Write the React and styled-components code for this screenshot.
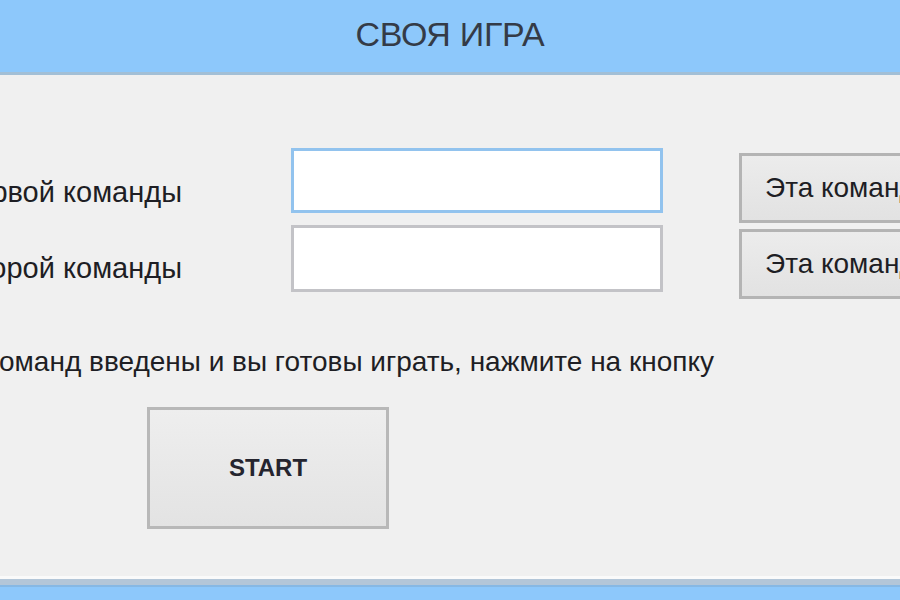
import styled, { createGlobalStyle } from "styled-components"

const GlobalStyle = createGlobalStyle`
  html, body {
    margin: 0;
    padding: 0;
    background: #f0f0f0;
    overflow: hidden;
  }
  * {
    box-sizing: border-box;
  }
`

const Window = styled.div`
  width: 900px;
  height: 600px;
  display: flex;
  flex-direction: column;
  font-family: "Liberation Sans", Arial, sans-serif;
  color: #1e1e24;
`

const Header = styled.div`
  height: 75px;
  flex-shrink: 0;
  background: #8dc8fb;
  border-bottom: 3px solid #a2bfd6;
  display: flex;
  align-items: center;
  justify-content: center;
  padding-bottom: 4px;
`

const Title = styled.h1`
  margin: 0;
  font-size: 34px;
  font-weight: normal;
  color: #343b47;
  letter-spacing: -0.3px;
`

const Main = styled.div`
  flex: 1;
  padding-top: 73px;
  display: flex;
  flex-direction: column;
`

const Row = styled.div`
  display: flex;
  align-items: flex-start;
  height: ${props => props.height || 77}px;
`

const LabelBox = styled.div`
  width: ${props => props.width || 182}px;
  flex-shrink: 0;
  display: flex;
  justify-content: flex-end;
  white-space: nowrap;
  font-size: 29px;
  line-height: 30px;
  margin-top: ${props => props.top || 0}px;
`

const TextInput = styled.input`
  margin-left: 109px;
  width: 372px;
  height: ${props => props.height || 65}px;
  background: #ffffff;
  border: 3px solid ${props => (props.focused ? "#92c3ee" : "#c3c3c7")};
  outline: none;
  flex-shrink: 0;
`

const TeamButton = styled.button`
  margin-left: 76px;
  margin-top: ${props => props.top || 0}px;
  width: 220px;
  height: 70px;
  flex-shrink: 0;
  background: linear-gradient(#ececec, #e2e2e2);
  border: 3px solid #b4b4b4;
  padding: 0 0 0 23px;
  text-align: left;
  white-space: nowrap;
  overflow: hidden;
  font-family: "Liberation Sans", Arial, sans-serif;
  font-size: 28px;
  color: #1e1e24;
`

const Message = styled(LabelBox)`
  width: 714px;
  font-size: 28px;
  margin-top: 48px;
`

const StartButton = styled.button`
  margin: 30px 0 0 147px;
  width: 242px;
  height: 122px;
  background: linear-gradient(#eeeeee, #e3e3e3);
  border: 3px solid #b8b8b8;
  font-family: "Liberation Sans", Arial, sans-serif;
  font-size: 24px;
  font-weight: bold;
  color: #25252f;
`

const Footer = styled.div`
  height: 24px;
  flex-shrink: 0;
  background: #8dc8fb;
  border-top: 3px solid #fafafa;
  box-shadow: inset 0 6px 0 #b3c6d8, inset 0 8px 0 #86b8e4;
`

function App() {
  return (
    <Window>
      <GlobalStyle />
      <Header>
        <Title>СВОЯ ИГРА</Title>
      </Header>
      <Main>
        <Row height={77}>
          <LabelBox top={29}>Название первой команды</LabelBox>
          <TextInput focused height={65} />
          <TeamButton top={5}>Эта команда отвечает</TeamButton>
        </Row>
        <Row height={74}>
          <LabelBox top={28}>Название второй команды</LabelBox>
          <TextInput height={67} />
          <TeamButton top={4}>Эта команда отвечает</TeamButton>
        </Row>
        <Message>Если названия команд введены и вы готовы играть, нажмите на кнопку</Message>
        <StartButton>START</StartButton>
      </Main>
      <Footer />
    </Window>
  )
}

export default App
